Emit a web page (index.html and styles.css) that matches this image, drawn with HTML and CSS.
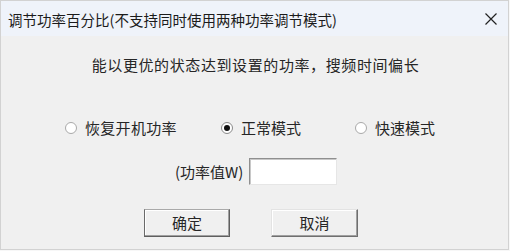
FILE: index.html
```html
<!DOCTYPE html>
<html lang="zh-CN">
<head>
<meta charset="utf-8">
<link rel="stylesheet" href="styles.css">
</head>
<body>
<div class="window">
  <div class="titlebar">
    <span class="title">调节功率百分比(不支持同时使用两种功率调节模式)</span>
    <svg class="close" width="12" height="12" viewBox="0 0 12 12"><path d="M0.5 0.5L11.5 11.5M11.5 0.5L0.5 11.5" stroke="#222" stroke-width="1.2" fill="none"/></svg>
  </div>
  <div class="content">
    <p class="desc">能以更优的状态达到设置的功率，搜频时间偏长</p>
    <div class="radios">
      <label class="radio r1"><span class="dot"></span><span>恢复开机功率</span></label>
      <label class="radio r2"><span class="dot on"></span><span>正常模式</span></label>
      <label class="radio r3"><span class="dot"></span><span>快速模式</span></label>
    </div>
    <div class="field">
      <span class="lbl">(功率值W)</span>
      <span class="input"></span>
    </div>
    <div class="buttons">
      <span class="btn default">确定</span>
      <span class="btn cancel">取消</span>
    </div>
  </div>
</div>
</body>
</html>
```
FILE: styles.css
```css
html, body { margin: 0; padding: 0; background: #f7f7f7; }
body { width: 510px; height: 251px; overflow: hidden; }
.window {
  box-sizing: border-box;
  width: 509px; height: 250px;
  border: 1px solid #d2d2d2;
  background: #f0f0f0;
  display: flex; flex-direction: column;
}
.titlebar {
  height: 35px;
  background: #eff3fa;
  display: flex; align-items: center; justify-content: space-between;
  padding: 0 11px 0 7px;
  flex: none;
}
.title {
  font-family: "Noto Sans CJK SC", "Noto Sans", sans-serif;
  font-size: 14.5px; line-height: 20px; color: #1b1b1b;
  position: relative; top: 1px;
}
.close { display: block; }
.content {
  font-family: "Noto Sans CJK SC", sans-serif;
  font-size: 15px; color: #262626;
  display: flex; flex-direction: column;
}
.desc {
  margin: 19px 0 0; text-align: center; line-height: 20px;
  letter-spacing: 0.6px; padding-left: 2px;
}
.radios {
  display: flex; margin-top: 43px; padding-left: 63px; line-height: 20px;
}
.radio { display: flex; align-items: center; gap: 8px; }
.r1 { width: 156px; }
.r2 { width: 134px; }
.r1 span:last-child { letter-spacing: 0.3px; }
.dot {
  box-sizing: border-box;
  width: 12px; height: 12px; border-radius: 50%;
  border: 1px solid #a9a9a9; background: #fff;
  display: flex; align-items: center; justify-content: center;
  margin-left: 1px;
}
.dot.on { border-color: #8a8a8a; }
.dot.on::after {
  content: ""; width: 6px; height: 6px; border-radius: 50%; background: #111;
}
.field {
  display: flex; align-items: center; gap: 6px;
  margin-top: 20px; padding-left: 174px;
}
.lbl { line-height: 20px; }
.input {
  box-sizing: border-box;
  width: 88px; height: 27px; background: #fff;
  border: 1px solid; border-color: #8f8f8f #e6e6e6 #e6e6e6 #8f8f8f;
  box-shadow: inset 1px 1px #c8c8c8;
}
.buttons {
  display: flex; gap: 41px; margin-top: 24px; padding-left: 143px;
}
.btn {
  box-sizing: border-box;
  height: 28px; display: flex; align-items: center; justify-content: center;
  background: #f0f0f0; line-height: 20px;
  border: 1px solid; border-color: #e3e3e3 #6f6f6f #6f6f6f #e3e3e3;
  box-shadow: inset -1px -1px #a0a0a0, inset 1px 1px #ffffff;
}
.btn.default { width: 86px; border-color: #a9a9a9 #5f5f5f #5f5f5f #6a6a6a; }
.btn.cancel { width: 87px; }
```
